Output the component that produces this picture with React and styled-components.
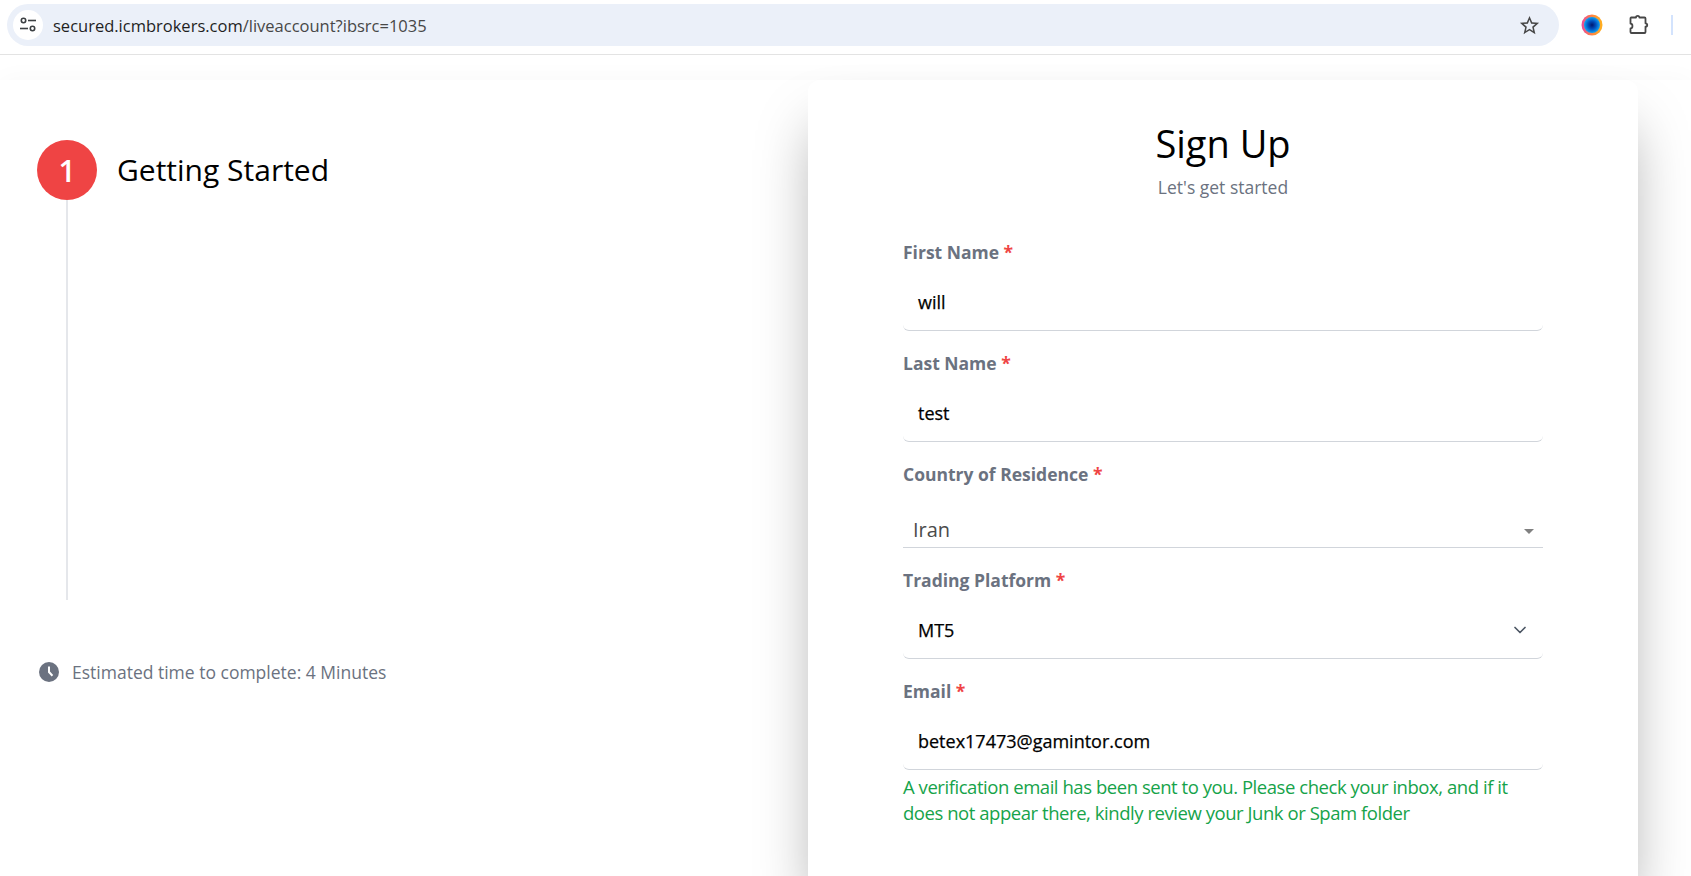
import React from 'react'
import { createGlobalStyle, styled } from 'styled-components'
import { ChevronDown } from 'lucide-react'

const GlobalStyle = createGlobalStyle`
  html, body {
    margin: 0;
    height: 876px;
    overflow: hidden;
    background: #fff;
    font-family: "Open Sans", "Noto Sans", sans-serif;
  }
  * { box-sizing: border-box; }
`

function TuneIcon() {
  return (
    <svg width="20" height="20" viewBox="0 0 20 20" fill="none" stroke="#3c4043" strokeWidth="1.6">
      <circle cx="5.5" cy="5.5" r="2.2" />
      <path d="M10 5.5h8" />
      <circle cx="14.5" cy="13.5" r="2.2" />
      <path d="M2 13.5h8" />
    </svg>
  )
}

function StarIcon() {
  return (
    <svg width="23" height="23" viewBox="0 0 24 24" fill="#474747">
      <path d="M22 9.24l-7.19-.62L12 2 9.19 8.63 2 9.24l5.46 4.73L5.82 21 12 17.27 18.18 21l-1.63-7.03L22 9.24zM12 15.4l-3.76 2.27 1-4.28-3.32-2.88 4.38-.38L12 6.1l1.71 4.04 4.38.38-3.32 2.88 1 4.28L12 15.4z" />
    </svg>
  )
}

function ProfileBall() {
  return (
    <svg width="22" height="22" viewBox="0 0 22 22">
      <defs>
        <linearGradient id="ring" x1="0" y1="0" x2="1" y2="0">
          <stop offset="0%" stopColor="#e8489a" />
          <stop offset="55%" stopColor="#ff8a3c" />
          <stop offset="100%" stopColor="#ffb21e" />
        </linearGradient>
        <radialGradient id="ball" cx="50%" cy="50%" r="50%">
          <stop offset="0%" stopColor="#00186e" />
          <stop offset="50%" stopColor="#0050c0" />
          <stop offset="100%" stopColor="#10a4f4" />
        </radialGradient>
      </defs>
      <circle cx="11" cy="11" r="10.5" fill="url(#ring)" />
      <circle cx="11" cy="11" r="8" fill="url(#ball)" />
    </svg>
  )
}

function PuzzleIcon() {
  return (
    <svg width="22" height="22" viewBox="0 0 22 22" fill="none" stroke="#474747" strokeWidth="1.8" strokeLinejoin="round">
      <path d="M3 3.5h5c0-2.2 3.4-2.2 3.4 0h5.1a1 1 0 0 1 1 1v4.8c2.3 0 2.3 3.4 0 3.4v5.3a1 1 0 0 1-1 1H3.5a1 1 0 0 1-1-1v-3.6c2.6 0 2.6-4.8 0-4.8V4.5a1 1 0 0 1 .5-1z" />
    </svg>
  )
}

function ClockIcon() {
  return (
    <svg width="20" height="20" viewBox="0 0 20 20">
      <circle cx="10" cy="10" r="10" fill="#6b7280" />
      <path d="M9 4.5h2v5l3.2 3.6-1.5 1.4L9 10.4z" fill="#fff" />
    </svg>
  )
}

function Field({ label, children }) {
  return (
    <FieldBox>
      <Label>
        {label} <Required>*</Required>
      </Label>
      {children}
    </FieldBox>
  )
}

function App() {
  return (
    <>
      <GlobalStyle />
      <BrowserBar>
        <Omnibox>
          <SiteBadge>
            <TuneIcon />
          </SiteBadge>
          <Url>
            secured.icmbrokers.com<UrlPath>/liveaccount?ibsrc=1035</UrlPath>
          </Url>
          <StarIcon />
        </Omnibox>
        <BarIcons>
          <ProfileBall />
          <PuzzleIcon />
          <BarStripe />
        </BarIcons>
      </BrowserBar>

      <Page>
        <StepsPanel>
          <StepHead>
            <StepNumber>1</StepNumber>
            <StepTitle>Getting Started</StepTitle>
          </StepHead>
          <StepLine />
          <Estimate>
            <ClockIcon />
            Estimated time to complete: 4 Minutes
          </Estimate>
        </StepsPanel>

        <Card>
          <Title>Sign Up</Title>
          <Subtitle>Let's get started</Subtitle>
          <Form>
            <Field label="First Name">
              <InputRow>will</InputRow>
            </Field>
            <Field label="Last Name">
              <InputRow>test</InputRow>
            </Field>
            <Field label="Country of Residence">
              <CountrySelect>
                Iran
                <Caret />
              </CountrySelect>
            </Field>
            <Field label="Trading Platform">
              <InputRow>
                MT5
                <ChevronDown size={20} color="#4b5563" strokeWidth={2} />
              </InputRow>
            </Field>
            <Field label="Email">
              <InputRow>betex17473@gamintor.com</InputRow>
              <Notice>
                A verification email has been sent to you. Please check your inbox, and if it does not appear there,
                kindly review your Junk or Spam folder
              </Notice>
            </Field>
          </Form>
        </Card>
      </Page>
    </>
  )
}

export default App

const BrowserBar = styled.div`
  height: 55px;
  display: flex;
  align-items: flex-start;
  padding: 4px 0 0 7px;
  background: #fff;
  border-bottom: 1px solid #e3e3e3;
`

const Omnibox = styled.div`
  width: 1552px;
  height: 42px;
  display: flex;
  align-items: center;
  padding: 0 18px 0 6px;
  border-radius: 21px;
  background: #ebf0f9;
`

const SiteBadge = styled.div`
  width: 30px;
  height: 30px;
  display: flex;
  align-items: center;
  justify-content: center;
  border-radius: 50%;
  background: #fff;
`

const Url = styled.div`
  flex: 1;
  margin-left: 10px;
  font-size: 16.5px;
  color: #1f1f1f;
`

const UrlPath = styled.span`
  color: #474747;
`

const BarIcons = styled.div`
  display: flex;
  align-items: center;
  height: 42px;
  margin-left: 22px;
  gap: 25px;
`

const BarStripe = styled.div`
  width: 2px;
  height: 20px;
  margin-left: -4px;
  background: #d3e3fd;
`

const Page = styled.main`
  display: flex;
  margin-top: 25px;
  padding-right: 53px;
  background: #fff;
  box-shadow: 0 0 25px rgba(0, 0, 0, 0.03);
  height: 796px;
`

const StepsPanel = styled.section`
  width: 808px;
  flex-shrink: 0;
  padding: 60px 0 0 37px;
`

const StepHead = styled.div`
  display: flex;
  align-items: center;
  gap: 20px;
`

const StepNumber = styled.div`
  width: 60px;
  height: 60px;
  display: flex;
  align-items: center;
  justify-content: center;
  border-radius: 50%;
  background: #ef4444;
  color: #fff;
  font-size: 30px;
  font-weight: 600;
`

const StepTitle = styled.h2`
  margin: 0 0 2px;
  font-size: 30px;
  font-weight: 400;
  color: #000;
`

const StepLine = styled.div`
  width: 2px;
  height: 400px;
  margin-left: 29px;
  background: #e5e7eb;
`

const Estimate = styled.div`
  display: flex;
  align-items: center;
  gap: 13px;
  margin: 60px 0 0 2px;
  font-size: 17.5px;
  color: #6b7280;
`

const Card = styled.section`
  width: 830px;
  height: 796px;
  flex-shrink: 0;
  padding: 36px 95px 0;
  border-radius: 12px 12px 0 0;
  background: #fff;
  box-shadow: 0 40px 60px -10px rgba(0, 0, 0, 0.36);
`

const Title = styled.h1`
  margin: 0;
  font-size: 38px;
  line-height: 54px;
  font-weight: 400;
  color: #000;
  text-align: center;
`

const Subtitle = styled.p`
  margin: 3px 0 0;
  font-size: 17.5px;
  line-height: 28px;
  color: #6b7280;
  text-align: center;
`

const Form = styled.div`
  display: flex;
  flex-direction: column;
  margin-top: 19px;
`

const FieldBox = styled.div`
  display: flex;
  flex-direction: column;
`

const Label = styled.label`
  height: 53px;
  display: block;
  padding-top: 20px;
  font-size: 17.5px;
  line-height: 24px;
  font-weight: 700;
  color: #6b7280;
`

const Required = styled.span`
  color: #ef4444;
`

const InputRow = styled.div`
  height: 58px;
  display: flex;
  align-items: center;
  justify-content: space-between;
  padding: 0 13px 0 15px;
  border-bottom: 1px solid #d1d5db;
  border-radius: 0 0 6px 6px;
  font-size: 18px;
  font-weight: 500;
  -webkit-text-stroke: 0.25px #000;
  color: #000;
`

const CountrySelect = styled.div`
  height: 53px;
  display: flex;
  align-items: flex-end;
  justify-content: space-between;
  padding: 0 9px 4px 10px;
  border-bottom: 1px solid #d1d5db;
  font-size: 20px;
  color: #4b4b4b;
`

const Caret = styled.span`
  width: 0;
  height: 0;
  margin-bottom: 9px;
  border-left: 5px solid transparent;
  border-right: 5px solid transparent;
  border-top: 5px solid #808080;
`

const Notice = styled.p`
  margin: 4px 0 0;
  padding-right: 10px;
  font-size: 18.5px;
  line-height: 26px;
  color: #16a34a;
  letter-spacing: -0.45px;
`
